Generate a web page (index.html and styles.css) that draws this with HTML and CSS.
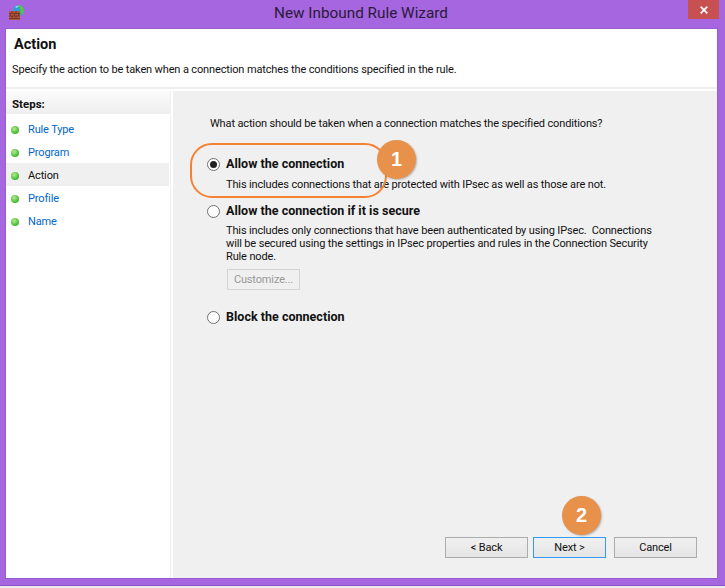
FILE: index.html
```html
<!DOCTYPE html>
<html lang="en">
<head>
<meta charset="utf-8">
<title>New Inbound Rule Wizard</title>
<link rel="stylesheet" href="styles.css">
</head>
<body>
<div class="window">
  <header class="titlebar">
    <svg class="app-icon" width="16" height="16" viewBox="0 0 16 16">
      <circle cx="9.500" cy="5.500" r="5.500" fill="#2f9fd0"/>
      <path d="M9.500 0a5.500 5.500 0 0 1 5.500 5.500c0 2-1 3.500-2.500 4.500L11 4z" fill="#58c24a"/>
      <path d="M6 2a5 5 0 0 1 4-1.500L8 3z" fill="#9fdcf0"/>
      <rect x="0" y="6" width="11" height="9" fill="#b0583c"/>
      <path d="M0 8.500h11M0 11h11M0 13.500h11M3 6v2.500M7 6v2.500M1.500 8.500V11M5.500 8.500V11M9.500 8.500V11M3 11v2.500M7 11v2.500" stroke="#6e3020" stroke-width=".8" fill="none"/>
    </svg>
    <div class="title">New Inbound Rule Wizard</div>
    <div class="close">
      <svg width="8" height="8" viewBox="0 0 8 8"><path d="M.7.700l6.600 6.600M7.300.700L.7 7.300" stroke="#fff" stroke-width="1.700"/></svg>
    </div>
  </header>
  <div class="client">
    <section class="head">
      <h1>Action</h1>
      <p>Specify the action to be taken when a connection matches the conditions specified in the rule.</p>
    </section>
    <div class="columns">
      <aside class="steps">
        <div class="steps-title">Steps:</div>
        <ul>
          <li class="step"><span class="dot"></span><span class="link">Rule Type</span></li>
          <li class="step"><span class="dot"></span><span class="link">Program</span></li>
          <li class="step current"><span class="dot"></span><span>Action</span></li>
          <li class="step"><span class="dot"></span><span class="link">Profile</span></li>
          <li class="step"><span class="dot"></span><span class="link">Name</span></li>
        </ul>
      </aside>
      <main class="panel">
        <div class="question">What action should be taken when a connection matches the specified conditions?</div>
        <div class="option first">
          <div class="option-label"><span class="radio checked"></span><b>Allow the connection</b></div>
          <div class="option-text">This includes connections that are protected with IPsec as well as those are not.</div>
        </div>
        <div class="option second">
          <div class="option-label"><span class="radio"></span><b>Allow the connection if it is secure</b></div>
          <div class="option-text">This includes only connections that have been authenticated by using IPsec.&nbsp; Connections<br>will be secured using the settings in IPsec properties and rules in the Connection Security<br>Rule node.</div>
          <button class="customize" disabled>Customize...</button>
        </div>
        <div class="option third">
          <div class="option-label"><span class="radio"></span><b>Block the connection</b></div>
        </div>
        <div class="buttons">
          <button class="btn">&lt; Back</button>
          <button class="btn next">Next &gt;</button>
          <button class="btn cancel">Cancel</button>
        </div>
      </main>
    </div>
  </div>
  <div class="callout-ring"></div>
  <div class="badge badge-one">1</div>
  <div class="badge badge-two">2</div>
</div>
<div class="below"></div>
</body>
</html>
```
FILE: styles.css
```css
* { box-sizing: border-box; }
html, body { margin: 0; height: 100%; background: #ececec; overflow: hidden; }
body { font-family: Roboto, "Open Sans", sans-serif; font-size: 11px; letter-spacing: -.14px; color: #111; }
.window { position: relative; width: 725px; height: 586px; background: #a666e0; border-bottom: 1px solid #8f52c4; display: flex; flex-direction: column; }
.titlebar { height: 29px; flex: none; position: relative; display: flex; justify-content: center; }
.app-icon { position: absolute; left: 9px; top: 5px; }
.title { font-size: 15.300px; letter-spacing: 0; line-height: 27px; color: #2a1a3a; margin-left: -3px; }
.close { position: absolute; left: 688px; top: 0; width: 31px; height: 19px; background: #c75050; display: flex; align-items: center; justify-content: center; }
.client { width: 711px; height: 549px; margin-left: 6px; background: #fff; display: flex; flex-direction: column; box-shadow: 0 0 0 1px #9a5ccf; }
.head { height: 60px; flex: none; border-bottom: 2px solid #efefef; padding: 7px 6px 0; }
h1 { margin: 0 0 0 2px; font-size: 14.500px; letter-spacing: 0; line-height: 18px; font-weight: 700; }
p { margin: 8px 0 0; line-height: 16px; }
.columns { flex: 1; display: flex; padding-top: 2px; }
.steps { width: 165px; flex: none; border-right: 1px solid #efefef; }
.steps-title { height: 23px; line-height: 26px; padding-left: 6px; font-weight: 700; font-size: 11.500px; letter-spacing: 0; background: linear-gradient(#fbfbfb, #efefef); }
ul { list-style: none; margin: 3px 0 0; padding: 0; }
.step { height: 23px; display: flex; align-items: center; padding: 2px 0 0 5px; gap: 9px; margin-right: 1px; }
.current { background: #f0f0f0; }
.dot { width: 8px; height: 8px; border-radius: 50%; background: radial-gradient(circle at 40% 35%, #b4ec90, #3fb82e 70%); flex: none; }
.link { color: #0066cc; }
.panel { width: 544px; margin-left: 2px; background: #f0f0f0; position: relative; display: flex; flex-direction: column; padding: 25px 20px 20px 34px; }
.question { line-height: 16px; margin-left: 3px; }
.option-label { display: flex; align-items: center; gap: 6px; line-height: 16px; font-size: 12.500px; letter-spacing: .02px; }
.radio { width: 13px; height: 13px; border-radius: 50%; background: #fff; border: 1px solid #707070; flex: none; position: relative; display: flex; align-items: center; justify-content: center; }
.checked::after { content: ""; width: 7px; height: 7px; border-radius: 50%; background: #222; }
.option-text { margin: 5px 0 0 19px; line-height: 13px; }
.first { margin-top: 24px; }
.first .option-text { margin-top: 6px; }
.second { margin-top: 12px; }
.third { margin-top: 19px; }
.customize { display: block; margin: 6px 0 0 20px; width: 73px; height: 21px; background: #f0f0f0; border: 1px solid #d4d4d4; color: #999; font: inherit; letter-spacing: inherit; padding: 0; }
.buttons { margin-top: auto; display: flex; margin-left: 238px; }
.btn { width: 83px; height: 21px; border: 1px solid #acacac; background: linear-gradient(#f0f0f0, #e5e5e5); font: inherit; letter-spacing: inherit; color: #111; padding: 0; }
.next { width: 73px; margin-left: 5px; border-color: #3399ff; }
.cancel { margin-left: 8px; }
.callout-ring { position: absolute; left: 190px; top: 143px; width: 197px; height: 55px; border: 2px solid #f58233; border-radius: 22px; }
.badge { position: absolute; width: 39px; height: 39px; border-radius: 50%; background: #e8914a; color: #fff; font-family: "Liberation Sans", sans-serif; font-size: 20px; font-weight: 700; letter-spacing: 0; display: flex; align-items: center; justify-content: center; box-shadow: 1px 1px 2px rgba(0,0,0,.25); }
.badge-one { left: 377px; top: 140px; }
.badge-two { left: 562px; top: 496px; }
.below { height: 2px; background: #ececec; }
```
